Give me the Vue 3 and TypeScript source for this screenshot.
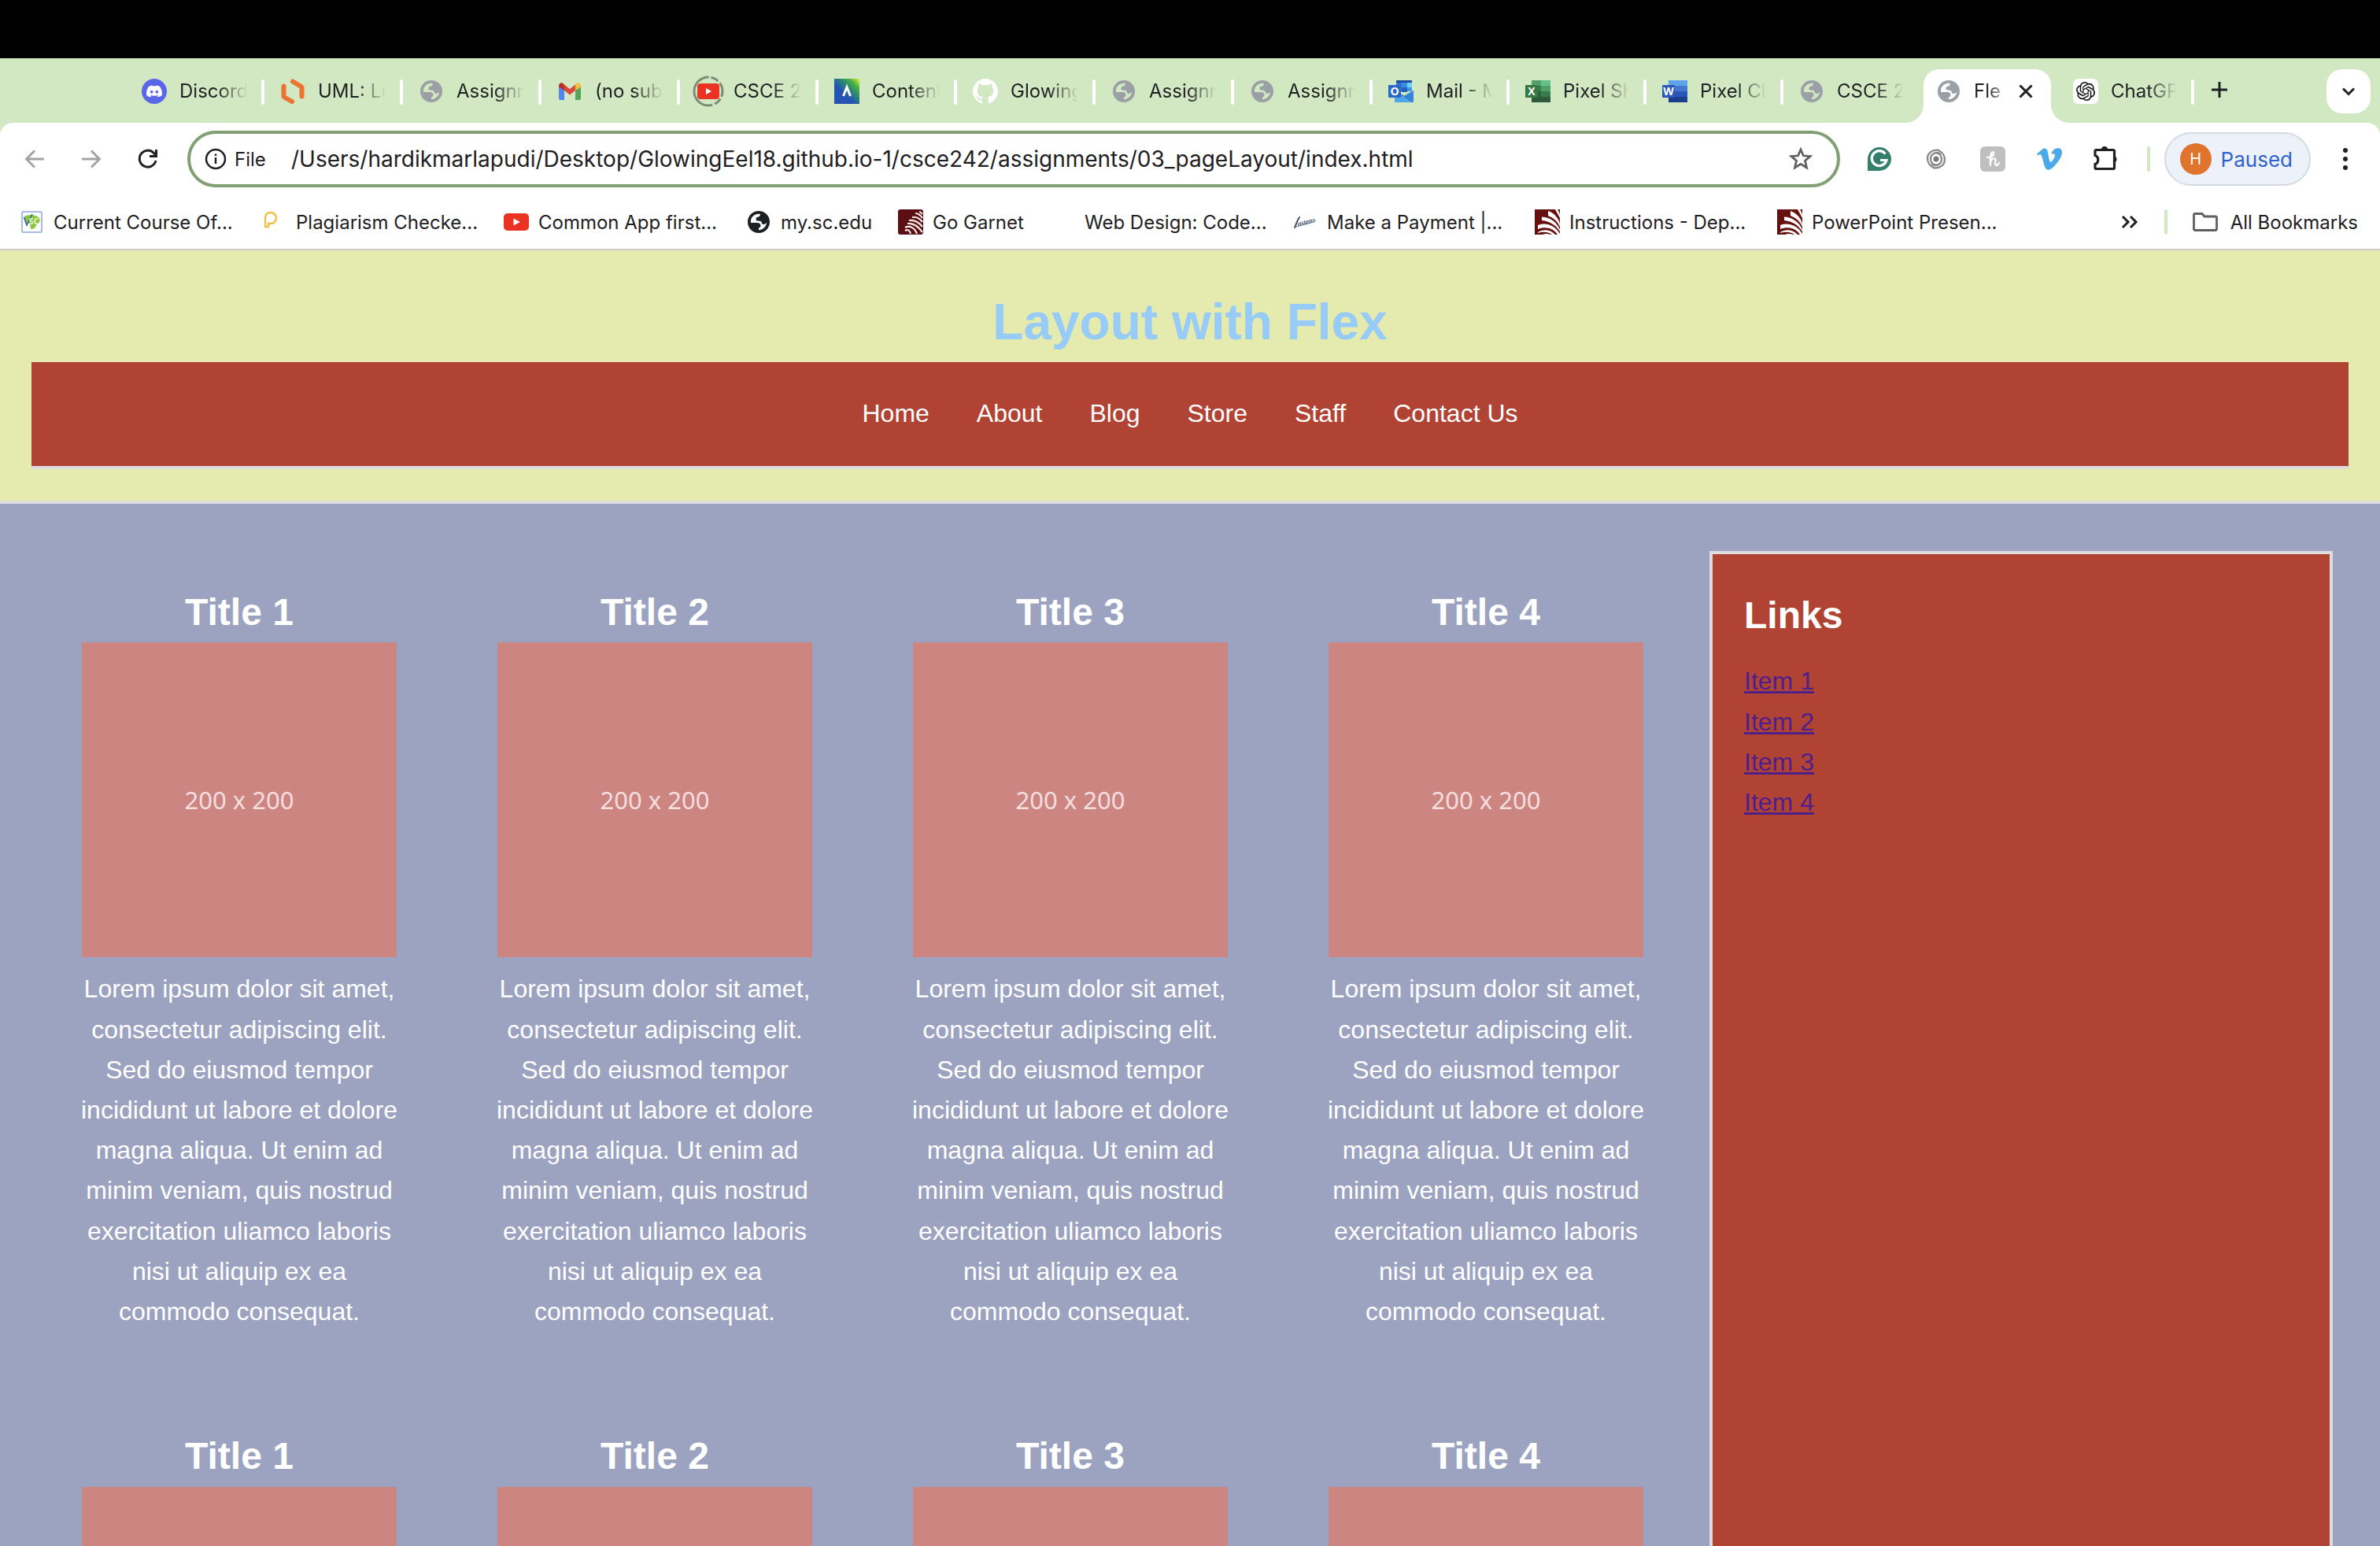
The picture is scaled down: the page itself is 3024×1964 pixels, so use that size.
<script setup lang="ts">
import { ref } from 'vue'

interface Tab {
  icon: string
  label: string
  narrow?: boolean
  active?: boolean
  divider?: boolean
}

interface Bookmark {
  icon: string
  label: string
  short?: boolean
}

const tabs: Tab[] = [
  { icon: 'discord', label: 'Discord', divider: true },
  { icon: 'lucid', label: 'UML: Lu', divider: true },
  { icon: 'globe', label: 'Assignm', divider: true },
  { icon: 'gmail', label: '(no subj', divider: true },
  { icon: 'youtube-ring', label: 'CSCE 24', divider: true },
  { icon: 'canvas', label: 'Content', divider: true },
  { icon: 'github', label: 'Glowing', divider: true },
  { icon: 'globe', label: 'Assignm', divider: true },
  { icon: 'globe', label: 'Assignm', divider: true },
  { icon: 'outlook', label: 'Mail - M', narrow: true, divider: true },
  { icon: 'excel', label: 'Pixel Sh', narrow: true, divider: true },
  { icon: 'word', label: 'Pixel Cl', narrow: true, divider: true },
  { icon: 'globe', label: 'CSCE 24', narrow: true },
  { icon: 'globe', label: 'Fle', narrow: true, active: true },
  { icon: 'openai', label: 'ChatGP', narrow: true, divider: true },
]

const bookmarks: Bookmark[] = [
  { icon: 'vsc', label: 'Current Course Of...' },
  { icon: 'plag', label: 'Plagiarism Checke...' },
  { icon: 'youtube', label: 'Common App first...' },
  { icon: 'globe', label: 'my.sc.edu', short: true },
  { icon: 'garnet', label: 'Go Garnet', short: true },
  { icon: '', label: 'Web Design: Code...' },
  { icon: 'jostens', label: 'Make a Payment |...' },
  { icon: 'usc', label: 'Instructions - Dep...' },
  { icon: 'usc', label: 'PowerPoint Presen...' },
]

const extensions = ['grammarly', 'swirl', 'honey', 'vimeo', 'puzzle']
const address = ref('/Users/hardikmarlapudi/Desktop/GlowingEel18.github.io-1/csce242/assignments/03_pageLayout/index.html')

const navItems = ['Home', 'About', 'Blog', 'Store', 'Staff', 'Contact Us']
const cards = [1, 2, 3, 4, 1, 2, 3, 4]
const links = ['Item 1', 'Item 2', 'Item 3', 'Item 4']
</script>

<template>
  <div class="screen">
    <svg class="sprite" aria-hidden="true">
      <defs>
        <linearGradient id="canvas-fill" x1="0" y1="1" x2="1" y2="0">
          <stop offset="0.4" stop-color="#2453b4" />
          <stop offset="0.62" stop-color="#2a8a70" />
          <stop offset="0.8" stop-color="#4db244" />
          <stop offset="1" stop-color="#e2f03c" />
        </linearGradient>
        <symbol id="i-discord" viewBox="0 0 32 32">
          <circle cx="16" cy="16" r="16" fill="#5b67ea" />
          <svg x="6" y="6" width="20" height="20" viewBox="0 0 24 24">
            <path fill="#fff" d="M20.317 4.3698a19.7913 19.7913 0 00-4.8851-1.5152.0741.0741 0 00-.0785.0371c-.211.3753-.4447.8648-.6083 1.2495-1.8447-.2762-3.68-.2762-5.4868 0-.1636-.3933-.4058-.8742-.6177-1.2495a.077.077 0 00-.0785-.037 19.7363 19.7363 0 00-4.8852 1.515.0699.0699 0 00-.0321.0277C.5334 9.0458-.319 13.5799.0992 18.0578a.0824.0824 0 00.0312.0561c2.0528 1.5076 4.0413 2.4228 5.9929 3.0294a.0777.0777 0 00.0842-.0276c.4616-.6304.8731-1.2952 1.226-1.9942a.076.076 0 00-.0416-.1057c-.6528-.2476-1.2743-.5495-1.8722-.8923a.077.077 0 01-.0076-.1277c.1258-.0943.2517-.1923.3718-.2914a.0743.0743 0 01.0776-.0105c3.9278 1.7933 8.18 1.7933 12.0614 0a.0739.0739 0 01.0785.0095c.1202.099.246.1981.3728.2924a.077.077 0 01-.0066.1276 12.2986 12.2986 0 01-1.873.8914.0766.0766 0 00-.0407.1067c.3604.698.7719 1.3628 1.225 1.9932a.076.076 0 00.0842.0286c1.961-.6067 3.9495-1.5219 6.0023-3.0294a.077.077 0 00.0313-.0552c.5004-5.177-.8382-9.6739-3.5485-13.6604a.061.061 0 00-.0312-.0286zM8.02 15.3312c-1.1825 0-2.1569-1.0857-2.1569-2.419 0-1.3332.9555-2.4189 2.157-2.4189 1.2108 0 2.1757 1.0952 2.1568 2.419 0 1.3332-.9555 2.4189-2.1569 2.4189zm7.9748 0c-1.1825 0-2.1569-1.0857-2.1569-2.419 0-1.3332.9554-2.4189 2.1569-2.4189 1.2108 0 2.1757 1.0952 2.1568 2.419 0 1.3332-.946 2.4189-2.1568 2.4189Z" />
          </svg>
        </symbol>
        <symbol id="i-lucid" viewBox="0 0 32 32">
          <path d="M4.500 9.500V23L15 29" fill="none" stroke="#ea7432" stroke-width="6" stroke-linecap="round" stroke-linejoin="bevel" />
          <path d="M16 3.500L27.500 10.500V22.500" fill="none" stroke="#ea7432" stroke-width="6" stroke-linecap="round" stroke-linejoin="bevel" />
        </symbol>
        <symbol id="i-globe" viewBox="-2 -2 32 32">
          <path fill="currentColor" fill-rule="evenodd" d="M14 0a14 14 0 1 0 0 28a14 14 0 1 0 0-28ZM4 13C4 8 8 4 13.500 3.700L16 3.900C16 6.500 14 8 11.500 8C10.500 8 11 10 10.500 11C10.500 12 12 12.700 15 12.700C17 12.700 17.500 14 18 15.500C18.500 17.500 21 17.700 24.200 15C23.500 20 19 24.200 14 24.200V21.500C15.500 21.500 16.500 20.500 16.500 18.500C16.500 16 14.500 15 12 15H4Z" />
        </symbol>
        <symbol id="i-gmail" viewBox="0 0 32 32">
          <path d="M2 9V25a2 2 0 0 0 2 2H9V14Z" fill="#4f87ee" />
          <path d="M30 9V25a2 2 0 0 1-2 2H23V14Z" fill="#55a65a" />
          <path d="M9 7.500L16 13L23 7.500V15L16 20.500L9 15Z" fill="#da4a3c" />
          <path d="M2 9C2 5 6 4 8 6.500L9 7.500V15L2 10.500Z" fill="#b8322a" />
          <path d="M30 9C30 5 26 4 24 6.500L23 7.500V15L30 10.500Z" fill="#f2bf42" />
        </symbol>
        <symbol id="i-youtube-ring" viewBox="0 0 40 40">
          <circle cx="20" cy="20" r="18" fill="none" stroke="#7d8b76" stroke-width="3" />
          <circle cx="20" cy="20" r="18" fill="none" stroke="#d2e8c2" stroke-width="5" stroke-dasharray="3 10 3 97.097" transform="rotate(-88 20 20)" />
          <circle cx="20" cy="20" r="18" fill="none" stroke="#d2e8c2" stroke-width="5" stroke-dasharray="3 10 3 97.097" transform="rotate(22 20 20)" />
          <rect x="6" y="10" width="28" height="20" rx="4" fill="#ea3323" />
          <path d="M17 16L24 20L17 24Z" fill="#fff" />
        </symbol>
        <symbol id="i-youtube" viewBox="0 0 32 32">
          <rect x="0" y="5" width="32" height="22" rx="5" fill="#ea3323" />
          <path d="M12.500 11.500L21 16L12.500 20.500Z" fill="#fff" />
        </symbol>
        <symbol id="i-canvas" viewBox="0 0 32 32">
          <rect width="32" height="32" fill="url(#canvas-fill)" />
          <path d="M11.500 22L16 10.500L20.500 22" fill="none" stroke="#fff" stroke-width="3" />
        </symbol>
        <symbol id="i-github" viewBox="0 0 16 16">
          <path fill="#fff" d="M8 0C3.58 0 0 3.58 0 8c0 3.54 2.29 6.53 5.47 7.59.4.07.55-.17.55-.38 0-.19-.01-.82-.01-1.49-2.01.37-2.53-.49-2.69-.94-.09-.23-.48-.94-.82-1.13-.28-.15-.68-.52-.01-.53.63-.01 1.08.58 1.23.82.72 1.21 1.87.87 2.33.66.07-.52.28-.87.51-1.07-1.78-.2-3.64-.89-3.64-3.95 0-.87.31-1.59.82-2.15-.08-.2-.36-1.02.08-2.12 0 0 .67-.21 2.2.82.64-.18 1.32-.27 2-.27s1.36.09 2 .27c1.53-1.04 2.2-.82 2.2-.82.44 1.1.16 1.92.08 2.12.51.56.82 1.27.82 2.15 0 3.07-1.87 3.75-3.65 3.95.29.25.54.73.54 1.48 0 1.07-.01 1.93-.01 2.2 0 .21.15.46.55.38A8.01 8.01 0 0016 8c0-4.42-3.58-8-8-8z" />
        </symbol>
        <symbol id="i-outlook" viewBox="0 0 32 32">
          <path d="M10 2h20v14H10z" fill="#2f75d0" />
          <path d="M10 2h20v3H10z" fill="#1f4e9c" />
          <path d="M17 5h7v6h-7z" fill="#3a8fe0" />
          <path d="M24 5h6v6h-6z" fill="#6fd0fa" />
          <path d="M17 11h7v6h-7z" fill="#2563b8" />
          <path d="M24 11h6v5h-6z" fill="#3f98e6" />
          <path d="M8 16L20 22L32 15V30H8Z" fill="#4fa5ea" />
          <path d="M20 22L32 15V29Z" fill="#3385d8" />
          <path d="M8 16L20 22L31 30" fill="none" stroke="#2362b0" stroke-width="1" />
          <rect x="0" y="8" width="16" height="16" rx="1" fill="#2968c8" />
          <text x="8" y="21" class="glyph office">O</text>
        </symbol>
        <symbol id="i-excel" viewBox="0 0 32 32">
          <path d="M8 2h12v7H8z" fill="#4fa06b" /><path d="M20 2h12v7H20z" fill="#65c088" />
          <path d="M8 9h12v7H8z" fill="#3a7d4c" /><path d="M20 9h12v7H20z" fill="#4fa06b" />
          <path d="M8 16h12v7H8z" fill="#2d6240" /><path d="M20 16h12v7H20z" fill="#3a7d4c" />
          <path d="M8 23h24v7H8z" fill="#2d5a3a" />
          <rect x="0" y="8" width="16" height="16" rx="1" fill="#357842" />
          <text x="8" y="21" class="glyph office">X</text>
        </symbol>
        <symbol id="i-word" viewBox="0 0 32 32">
          <path d="M8 2h24v7H8z" fill="#5ea2ea" /><path d="M8 9h24v7H8z" fill="#4378cf" />
          <path d="M8 16h24v7H8z" fill="#2a56b8" /><path d="M8 23h24v7H8z" fill="#1e3d8c" />
          <rect x="0" y="8" width="16" height="16" rx="1" fill="#2c58bb" />
          <text x="8" y="21" class="glyph office">W</text>
        </symbol>
        <symbol id="i-openai" viewBox="0 0 32 32">
          <rect width="32" height="32" rx="7" fill="#fff" />
          <svg x="4" y="4" width="24" height="24" viewBox="0 0 24 24">
            <path fill="#111" d="M22.2819 9.8211a5.9847 5.9847 0 0 0-.5157-4.9108 6.0462 6.0462 0 0 0-6.5098-2.9A6.0651 6.0651 0 0 0 4.9807 4.1818a5.9847 5.9847 0 0 0-3.9977 2.9 6.0462 6.0462 0 0 0 .7427 7.0966 5.98 5.98 0 0 0 .511 4.9107 6.051 6.051 0 0 0 6.5146 2.9001A5.9847 5.9847 0 0 0 13.2599 24a6.0557 6.0557 0 0 0 5.7718-4.2058 5.9894 5.9894 0 0 0 3.9977-2.9001 6.0557 6.0557 0 0 0-.7475-7.0729zm-9.022 12.6081a4.4755 4.4755 0 0 1-2.8764-1.0408l.1419-.0804 4.7783-2.7582a.7948.7948 0 0 0 .3927-.6813v-6.7369l2.02 1.1686a.071.071 0 0 1 .038.052v5.5826a4.504 4.504 0 0 1-4.4945 4.4944zm-9.6607-4.1254a4.4708 4.4708 0 0 1-.5346-3.0137l.142.0852 4.783 2.7582a.7712.7712 0 0 0 .7806 0l5.8428-3.3685v2.3324a.0804.0804 0 0 1-.0332.0615L9.74 19.9502a4.4992 4.4992 0 0 1-6.1408-1.6464zM2.3408 7.8956a4.485 4.485 0 0 1 2.3655-1.9728V11.6a.7664.7664 0 0 0 .3879.6765l5.8144 3.3543-2.0201 1.1685a.0757.0757 0 0 1-.071 0l-4.8303-2.7865A4.504 4.504 0 0 1 2.3408 7.872zm16.5963 3.8558L13.1038 8.364 15.1192 7.2a.0757.0757 0 0 1 .071 0l4.8303 2.7913a4.4944 4.4944 0 0 1-.6765 8.1042v-5.6772a.79.79 0 0 0-.407-.667zm2.0107-3.0231l-.142-.0852-4.7735-2.7818a.7759.7759 0 0 0-.7854 0L9.409 9.2297V6.8974a.0662.0662 0 0 1 .0284-.0615l4.8303-2.7866a4.4992 4.4992 0 0 1 6.6802 4.66zM8.3065 12.863l-2.02-1.1638a.0804.0804 0 0 1-.038-.0567V6.0742a4.4992 4.4992 0 0 1 7.3757-3.4537l-.142.0805L8.704 5.459a.7948.7948 0 0 0-.3927.6813zm1.0976-2.3654l2.602-1.4998 2.6069 1.4998v2.9994l-2.5974 1.4997-2.6067-1.4997Z" />
          </svg>
        </symbol>
        <symbol id="i-vsc" viewBox="0 0 32 32">
          <rect x="4" y="3" width="25" height="26" rx="1" fill="#fff" stroke="#8ea7d8" stroke-width="1.500" />
          <path d="M7 9C11 6 22 6 26 11C28 15 25 18 22 20C21 24 18 25 16 25C13 22 16 19 13 18C9 17 6 13 7 9Z" fill="#8cc63f" />
          <path d="M6.500 10L10 20L17 6" fill="none" stroke="#2d5f96" stroke-width="1.500" />
          <text x="19" y="19" class="glyph vsc">SC</text>
        </symbol>
        <symbol id="i-plag" viewBox="0 0 32 32">
          <path d="M5 22V11C5 6 8 4 12 4S19 7 19 11S16 18 12 18H9V22Z" fill="none" stroke="#f2c14a" stroke-width="2.500" />
        </symbol>
        <symbol id="i-garnet" viewBox="0 0 32 32">
          <rect width="32" height="32" rx="3" fill="#5b0f12" />
          <g fill="none" stroke="#f6eded" stroke-width="2.200">
            <path d="M9 27C12 25 15 26 16 31" /><path d="M9 23C15 20 21 23 24 31" /><path d="M12 18C20 17 26 22 31 29" />
            <path d="M14 14C21 13 27 17 31 22" /><path d="M18 10C23 9 28 12 31 16" /><path d="M22 5C26 5 29 8 31 11" />
            <path d="M27 3C29 3 30 5 31 6" />
          </g>
        </symbol>
        <symbol id="i-usc" viewBox="0 0 32 32">
          <rect width="32" height="32" fill="#661010" />
          <g fill="#fff">
            <path d="M4 20C15 16 26 21 32 31V32H29C24 24 14 21 4 25Z" />
            <path d="M9 9.500C20 10 29 17 32 26V28C27 20 19 15 9 14Z" />
            <path d="M17 2C26 5 31 13 32 19V22C28 14 24 11 17 8Z" />
            <path d="M26 0H29C31 3 32 6 32 8V11C30 7 28 4 26 0Z" />
            <path d="M4 29C12 24 21 26 26 32H22C17 28 10 28 4 30Z" />
            <path d="M10 32C13 30.500 17 30.500 20 32Z" />
          </g>
        </symbol>
        <symbol id="i-jostens" viewBox="0 0 32 32">
          <path d="M3 23C5 19 6 14 9 10" fill="none" stroke="#3c4d6b" stroke-width="2" stroke-linecap="round" />
          <text x="18" y="19" class="glyph jostens" transform="rotate(-14 16 16)">ostens</text>
          <path d="M5 22L27 16" stroke="#5b6b85" stroke-width="1" />
        </symbol>
        <symbol id="i-grammarly" viewBox="0 0 32 32">
          <path d="M1 31V16A15 15 0 1 1 16 31Z" fill="#357f6d" />
          <path d="M23.500 9.500A9.500 9.500 0 1 0 25 17.500H17" fill="none" stroke="#fff" stroke-width="3.200" />
        </symbol>
        <symbol id="i-swirl" viewBox="0 0 32 32">
          <circle cx="16" cy="16" r="3.500" fill="#777" />
          <g fill="none" stroke="#8a8a8a" stroke-width="2.400">
            <path d="M20 5C10 3 5 10 5 15C5 20 8 25 13 27" />
            <path d="M12 27C22 29 27 22 27 17C27 12 24 7 19 5" />
            <path d="M22 10C16 5 9 10 9 16C9 21 13 24 17 24" />
            <path d="M10 22C16 27 23 22 23 16C23 11 19 8 15 8" />
          </g>
        </symbol>
        <symbol id="i-honey" viewBox="0 0 32 32">
          <rect width="32" height="32" rx="6" fill="#bfbfbf" />
          <path d="M9 14C13 15 18 11 17 8C16 6 13 8 13 14V24M13 20C14 15 19 14 19.500 17C19.500 20 18 24 20.500 24C22.500 24 23 23 24 21" fill="none" stroke="#fff" stroke-width="2.300" stroke-linecap="round" />
        </symbol>
        <symbol id="i-vimeo" viewBox="0 0 24 24">
          <path fill="#4ba9e9" d="M23.9765 6.4168c-.105 2.338-1.739 5.5429-4.894 9.6088-3.2679 4.247-6.0258 6.3699-8.2898 6.3699-1.409 0-2.578-1.294-3.553-3.881l-1.9179-7.1138c-.719-2.584-1.488-3.878-2.312-3.878-.179 0-.806.378-1.8809 1.132l-1.129-1.457a315.06 315.06 0 003.501-3.1279c1.579-1.368 2.765-2.085 3.5539-2.159 1.867-.18 3.016 1.1 3.447 3.838.465 2.953.789 4.789.971 5.5069.5389 2.45 1.1309 3.674 1.7759 3.674.502 0 1.256-.796 2.265-2.385 1.004-1.589 1.54-2.797 1.612-3.628.144-1.371-.395-2.061-1.614-2.061-.574 0-1.167.121-1.777.391 1.186-3.8679 3.434-5.7568 6.7619-5.6368 2.4729.06 3.6279 1.664 3.4929 4.7969z" />
        </symbol>
        <symbol id="i-puzzle" viewBox="0 0 32 32">
          <path d="M3.500 4.500H25a1.500 1.500 0 0 1 1.500 1.500V27a1.500 1.500 0 0 1-1.500 1.500H3.500A1.500 1.500 0 0 1 2 27V22.500C7 21 7 13 2 11.500V6A1.500 1.500 0 0 1 3.500 4.500Z" fill="none" stroke="#1f2023" stroke-width="3.200" />
          <path d="M10 4A4 4 0 0 1 18 4ZM27 12.500A4 4 0 0 1 27 20Z" fill="#1f2023" />
        </symbol>
        <symbol id="i-back" viewBox="0 0 32 32">
          <path d="M28 16H6M16 5.500L5.500 16L16 26.500" fill="none" stroke="#a3a3a3" stroke-width="3" />
        </symbol>
        <symbol id="i-forward" viewBox="0 0 32 32">
          <path d="M4 16H26M16 5.500L26.500 16L16 26.500" fill="none" stroke="#a3a3a3" stroke-width="3" />
        </symbol>
        <symbol id="i-reload" viewBox="0 0 32 32">
          <path d="M26 18A10.500 10.500 0 1 1 23.500 8.500L26 11" fill="none" stroke="#1f2023" stroke-width="3" />
          <path d="M28 4V14H18V11H25V4Z" fill="#1f2023" />
        </symbol>
        <symbol id="i-info" viewBox="0 0 32 32">
          <circle cx="16" cy="16" r="12" fill="none" stroke="#1f2023" stroke-width="2.500" />
          <path d="M16 14V22M16 9.500V12" stroke="#1f2023" stroke-width="2.500" />
        </symbol>
        <symbol id="i-star" viewBox="0 0 32 32">
          <path d="M16 4L19.400 11.800L28 12.600L21.500 18.300L23.500 27L16 22.400L8.500 27L10.500 18.300L4 12.600L12.600 11.800Z" fill="none" stroke="#5f6062" stroke-width="2.800" />
        </symbol>
        <symbol id="i-folder" viewBox="0 0 32 32">
          <path d="M3 5.500H12L15 9H29A1.500 1.500 0 0 1 30.500 10.500V25A1.500 1.500 0 0 1 29 26.500H3A1.500 1.500 0 0 1 1.500 25V7A1.500 1.500 0 0 1 3 5.500Z" fill="none" stroke="#5f6062" stroke-width="2.800" />
        </symbol>
        <symbol id="i-more" viewBox="0 0 32 32">
          <path d="M7 9L14 16L7 23M17 9L24 16L17 23" fill="none" stroke="#1f2023" stroke-width="3" />
        </symbol>
        <symbol id="i-dots" viewBox="0 0 32 32">
          <circle cx="16" cy="5" r="3" fill="#1f2023" /><circle cx="16" cy="16" r="3" fill="#1f2023" /><circle cx="16" cy="27" r="3" fill="#1f2023" />
        </symbol>
        <symbol id="i-plus" viewBox="0 0 32 32">
          <path d="M16 6V26M6 16H26" stroke="#1f2023" stroke-width="3" />
        </symbol>
        <symbol id="i-chevron" viewBox="0 0 32 32">
          <path d="M9 12.500L16 19.500L23 12.500" fill="none" stroke="#1f2023" stroke-width="3" />
        </symbol>
        <symbol id="i-close" viewBox="0 0 32 32">
          <path d="M8.500 8.500L23.500 23.500M23.500 8.500L8.500 23.500" stroke="#1f2023" stroke-width="3" />
        </symbol>
        <symbol id="i-flare" viewBox="0 0 24 24">
          <path d="M24 0V24H0C14 24 24 14 24 0Z" fill="#fff" />
        </symbol>
      </defs>
    </svg>

    <div class="notch-bar"></div>

    <div class="chrome">
      <div class="tab-strip">
        <div
          v-for="(tab, i) in tabs"
          :key="i"
          class="tab"
          :class="{ narrow: tab.narrow, active: tab.active, divider: tab.divider }"
        >
          <template v-if="tab.active">
            <svg class="flare left" aria-hidden="true"><use href="#i-flare" /></svg>
            <svg class="flare right" aria-hidden="true"><use href="#i-flare" /></svg>
          </template>
          <svg class="icon favicon" :class="tab.icon" aria-hidden="true"><use :href="'#i-' + tab.icon" /></svg>
          <span class="tab-label">{{ tab.label }}</span>
          <button v-if="tab.active" class="icon-button" aria-label="Close tab">
            <svg class="icon"><use href="#i-close" /></svg>
          </button>
        </div>
        <button class="icon-button new-tab" aria-label="New tab">
          <svg class="icon"><use href="#i-plus" /></svg>
        </button>
        <button class="icon-button tab-search" aria-label="Search tabs">
          <svg class="icon"><use href="#i-chevron" /></svg>
        </button>
      </div>

      <div class="toolbar">
        <div class="address-row">
          <div class="button-group">
            <button class="icon-button" aria-label="Back"><svg class="icon"><use href="#i-back" /></svg></button>
            <button class="icon-button" aria-label="Forward"><svg class="icon"><use href="#i-forward" /></svg></button>
            <button class="icon-button" aria-label="Reload"><svg class="icon"><use href="#i-reload" /></svg></button>
          </div>
          <div class="omnibox">
            <svg class="icon" aria-hidden="true"><use href="#i-info" /></svg>
            <label for="address">File</label>
            <input id="address" v-model="address" type="text" spellcheck="false" />
            <button class="icon-button" aria-label="Bookmark this tab"><svg class="icon"><use href="#i-star" /></svg></button>
          </div>
          <div class="button-group">
            <button v-for="ext in extensions" :key="ext" class="icon-button" :aria-label="ext">
              <svg class="icon"><use :href="'#i-' + ext" /></svg>
            </button>
          </div>
          <span class="rule ext-rule"></span>
          <button class="profile"><span class="avatar">H</span>Paused</button>
          <button class="icon-button" aria-label="Menu"><svg class="icon"><use href="#i-dots" /></svg></button>
        </div>

        <div class="bookmark-row">
          <a v-for="mark in bookmarks" :key="mark.label" href="#" class="bookmark" :class="{ short: mark.short }">
            <svg class="icon" aria-hidden="true"><use v-if="mark.icon" :href="'#i-' + mark.icon" /></svg>
            <span>{{ mark.label }}</span>
          </a>
          <button class="icon-button overflow" aria-label="More bookmarks"><svg class="icon"><use href="#i-more" /></svg></button>
          <span class="rule"></span>
          <button class="all-bookmarks"><svg class="icon" aria-hidden="true"><use href="#i-folder" /></svg>All Bookmarks</button>
        </div>
      </div>
    </div>

    <div class="page">
      <header>
        <h1>Layout with Flex</h1>
        <nav>
          <a v-for="item in navItems" :key="item" href="#">{{ item }}</a>
        </nav>
      </header>
      <main>
        <section class="cards">
          <article v-for="(n, i) in cards" :key="i" class="card">
            <h2>Title {{ n }}</h2>
            <div class="placeholder">200 x 200</div>
            <p>
              Lorem ipsum dolor sit amet, consectetur adipiscing elit. Sed do eiusmod tempor incididunt ut labore et
              dolore magna aliqua. Ut enim ad minim veniam, quis nostrud exercitation uliamco laboris nisi ut aliquip ex
              ea commodo consequat.
            </p>
          </article>
        </section>
        <aside>
          <h2>Links</h2>
          <ul>
            <li v-for="link in links" :key="link"><a href="#">{{ link }}</a></li>
          </ul>
        </aside>
      </main>
    </div>
  </div>
</template>

<style>
body {
  overflow: hidden;
}
</style>

<style scoped>
* {
  box-sizing: border-box;
  margin: 0;
  padding: 0;
}
.screen {
  display: flex;
  flex-direction: column;
  height: 100vh;
  overflow: hidden;
}
.sprite {
  position: absolute;
  width: 0;
  height: 0;
}
.glyph {
  font-family: "Open Sans", sans-serif;
  font-weight: 700;
  text-anchor: middle;
}
.office {
  font-size: 14px;
  fill: #fff;
}
.vsc {
  font-size: 11px;
  fill: #e8f3d6;
}
.jostens {
  font-family: "Liberation Serif", serif;
  font-size: 9px;
  font-style: italic;
  fill: #3c4d6b;
}
.notch-bar {
  flex: none;
  height: 74px;
  background: #000;
}
.chrome {
  flex: none;
  background: #d2e8c2;
  color: #1f2023;
  font-family: Inter, sans-serif;
  font-size: 24px;
}
.icon {
  display: block;
  flex: none;
  width: 32px;
  height: 32px;
}
button {
  border: 0;
  background: none;
  color: inherit;
  font: inherit;
}
.icon-button {
  flex: none;
}
.tab-strip {
  display: flex;
  align-items: flex-start;
  padding: 14px 12px 0 160px;
}
.tab {
  position: relative;
  display: flex;
  align-items: center;
  gap: 16px;
  width: 176px;
  height: 68px;
  padding: 0 20px 12px;
}
.tab.narrow {
  width: 174px;
}
.tab.divider::after {
  content: "";
  position: absolute;
  top: 13px;
  right: 0;
  width: 4px;
  height: 32px;
  border-radius: 2px;
  background: #fff;
}
.tab.active::before {
  content: "";
  position: absolute;
  inset: 0 8px 0 4px;
  border-radius: 20px 20px 0 0;
  background: #fff;
}
.tab.active > * {
  position: relative;
}
.tab.active > .flare {
  position: absolute;
  bottom: 0;
  width: 24px;
  height: 24px;
}
.flare.left {
  left: -20px;
}
.flare.right {
  right: -16px;
  transform: scaleX(-1);
}
.favicon {
  color: #9aa0a6;
}
.favicon.youtube-ring {
  width: 40px;
  height: 40px;
  margin: -4px;
}
.tab-label {
  flex: 1;
  min-width: 0;
  overflow: hidden;
  line-height: 32px;
  white-space: nowrap;
  mask-image: linear-gradient(to right, #000 55%, transparent 98%);
}
.tab.active .tab-label {
  flex: none;
  width: 34px;
  mask-image: linear-gradient(to right, #000 50%, rgb(0 0 0 / 40%) 100%);
}
.new-tab {
  margin: 10px 0 0 16px;
}
.tab-search {
  margin-left: auto;
  padding: 12px;
  border-radius: 20px;
  background: #fff;
}
.toolbar {
  padding-top: 10px;
  border-bottom: 2px solid #cccccc;
  border-radius: 16px 16px 0 0;
  background: #fff;
}
.address-row {
  display: flex;
  align-items: center;
  padding: 0 28px;
}
.button-group {
  display: flex;
  gap: 40px;
}
.omnibox {
  display: flex;
  flex: 1;
  align-items: center;
  gap: 8px;
  height: 72px;
  margin: 0 34px;
  padding: 0 30px 0 16px;
  border: 4px solid #80a073;
  border-radius: 36px;
}
.omnibox label {
  width: 64px;
}
.omnibox input {
  flex: 1;
  min-width: 0;
  border: 0;
  outline: 0;
  background: none;
  color: inherit;
  font: inherit;
  font-size: 28px;
}
.rule {
  width: 4px;
  height: 32px;
  border-radius: 2px;
  background: #d2e8c2;
}
.ext-rule {
  margin: 0 18px 0 36px;
}
.profile {
  display: flex;
  align-items: center;
  gap: 12px;
  height: 68px;
  margin-right: 28px;
  padding: 0 21px 0 18px;
  border: 2px solid #d3dae3;
  border-radius: 34px;
  background: #edf2fa;
  color: #2f62cf;
  font-size: 26px;
}
.avatar {
  width: 40px;
  height: 40px;
  border-radius: 50%;
  background: #e0742c;
  color: #fff;
  font-size: 20px;
  line-height: 40px;
  text-align: center;
}
.bookmark-row {
  display: flex;
  align-items: center;
  padding: 24px 28px 14px 24px;
}
.bookmark {
  display: flex;
  align-items: center;
  gap: 12px;
  width: 308px;
  height: 40px;
  color: inherit;
  text-decoration: none;
  white-space: nowrap;
}
.bookmark.short {
  width: 193px;
}
.overflow {
  margin: 0 28px 0 auto;
}
.all-bookmarks {
  display: flex;
  align-items: center;
  gap: 16px;
  margin-left: 32px;
}
.page {
  flex: 1;
  min-height: 0;
  overflow: hidden;
  background: #9ca3c0;
  color: #fff;
  font-family: "Liberation Sans", Arial, sans-serif;
  font-size: 32px;
  line-height: 1.6;
}
header {
  padding: 40px;
  border-bottom: 4px solid #dddddd;
  background: #e5ebaf;
}
h1 {
  color: #97cbf8;
  font-size: 64px;
  text-align: center;
}
h2 {
  font-size: 48px;
}
nav {
  display: flex;
  justify-content: center;
  gap: 60px;
  padding: 40px;
  border-bottom: 4px solid #dddddd;
  background: #b14335;
}
nav a {
  color: inherit;
  text-decoration: none;
}
main {
  display: flex;
  gap: 40px;
  padding: 60px;
}
.cards {
  display: grid;
  flex: 1;
  grid-template-columns: repeat(4, 1fr);
  gap: 40px;
}
.card {
  padding: 40px;
  text-align: center;
}
.placeholder {
  display: flex;
  align-items: center;
  justify-content: center;
  width: 400px;
  height: 400px;
  margin: 0 auto 15px;
  background: #cd8582;
  color: #f3dfde;
  font-family: "Noto Sans", sans-serif;
  font-size: 31px;
}
aside {
  width: 792px;
  padding: 40px;
  border: 4px solid #dddddd;
  background: #b14335;
}
aside ul {
  margin-top: 20px;
  list-style: none;
}
aside a {
  color: #4d1f8a;
}
</style>
